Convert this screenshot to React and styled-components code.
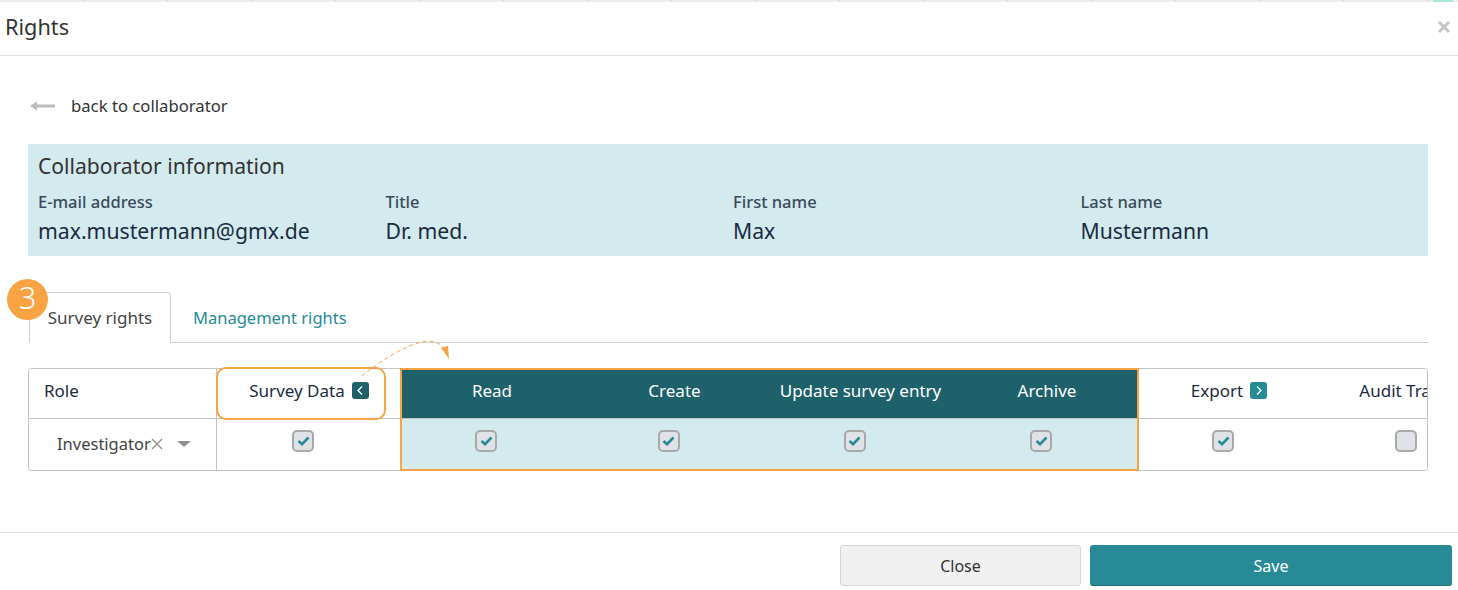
import React from "react";
import styled, { createGlobalStyle } from "styled-components";

const GlobalStyle = createGlobalStyle`
  html, body {
    margin: 0;
    padding: 0;
    background: #fff;
  }
  * {
    box-sizing: border-box;
  }
`;

const infoFields = [
  { label: "E-mail address", value: "max.mustermann@gmx.de" },
  { label: "Title", value: "Dr. med." },
  { label: "First name", value: "Max" },
  { label: "Last name", value: "Mustermann" },
];

const columns = [
  { name: "Survey Data", width: 184, toggle: "open" },
  { name: "Read", width: 182, sub: true },
  { name: "Create", width: 183, sub: true },
  { name: "Update survey entry", width: 189, sub: true },
  { name: "Archive", width: 184, sub: true },
  { name: "Export", width: 180, toggle: "closed" },
  { name: "Audit Trail", width: 186, off: true },
];

const gridColumns = "188px " + columns.map((c) => c.width + "px").join(" ");

const App = () => {
  return (
    <>
      <GlobalStyle />
      <Modal>
        <TopStrip>
          {Array.from({ length: 17 }).map((_, i) => (
            <StripCell key={i} />
          ))}
          <StripMint />
        </TopStrip>
        <Header>
          <Title>Rights</Title>
          <CloseX>
            <svg width="14" height="14" viewBox="0 0 14 14">
              <path d="M2 2l10 10M12 2L2 12" stroke="#c4c4c4" strokeWidth="3" />
            </svg>
          </CloseX>
        </Header>
        <Body>
          <BackRow>
            <svg width="25" height="10" viewBox="0 0 25 10">
              <path d="M0 5l7-4.500v3h18v3H7v3z" fill="#bdbdbd" />
            </svg>
            <span>back to collaborator</span>
          </BackRow>
          <InfoPanel>
            <InfoTitle>Collaborator information</InfoTitle>
            <InfoGrid>
              {infoFields.map((f) => (
                <div key={f.label}>
                  <InfoLabel>{f.label}</InfoLabel>
                  <InfoValue>{f.value}</InfoValue>
                </div>
              ))}
            </InfoGrid>
          </InfoPanel>
          <TabsWrap>
            <StepBadge>3</StepBadge>
            <ActiveTab>Survey rights</ActiveTab>
            <Tab>Management rights</Tab>
          </TabsWrap>
          <TableWrap>
            <Table>
              <HeadCell $first>Role</HeadCell>
              {columns.map((c) => (
                <HeadCell key={c.name} $sub={c.sub} $off={c.off} $center>
                  <span>{c.name}</span>
                  {c.toggle && (
                    <ToggleIcon $open={c.toggle === "open"}>
                      <svg width="8" height="11" viewBox="0 0 8 11">
                        <path
                          d={c.toggle === "open" ? "M6 1.500L2 5.500l4 4" : "M2 1.500l4 4-4 4"}
                          fill="none"
                          stroke="#fff"
                          strokeWidth="1.300"
                        />
                      </svg>
                    </ToggleIcon>
                  )}
                </HeadCell>
              ))}
              <RoleCell>
                <span>Investigator</span>
                <ClearIcon>
                  <svg width="12" height="12" viewBox="0 0 12 12">
                    <path d="M1 1l10 10M11 1L1 11" stroke="#8f8f8f" strokeWidth="1.300" />
                  </svg>
                </ClearIcon>
                <Caret />
              </RoleCell>
              {columns.map((c) => (
                <BodyCell key={c.name} $sub={c.sub}>
                  <CheckBox>
                    {!c.off && (
                      <svg width="13" height="10" viewBox="0 0 13 10">
                        <path d="M1.500 5l3.500 3.200L11.500 1.500" fill="none" stroke="#278b96" strokeWidth="2.600" />
                      </svg>
                    )}
                  </CheckBox>
                </BodyCell>
              ))}
            </Table>
            <SubFrame />
            <SurveyFrame />
            <ArrowLayer width="100" height="40" viewBox="0 0 100 40">
              <path
                d="M2 37C20 22 50 3 68 2c7 0 13 3 17 8"
                fill="none"
                stroke="#f9a345"
                strokeWidth="1"
                strokeDasharray="4 3"
              />
              <path d="M81 9l7-2 1 13z" fill="#f9a345" />
            </ArrowLayer>
          </TableWrap>
        </Body>
        <Footer>
          <CloseButton>Close</CloseButton>
          <SaveButton>Save</SaveButton>
        </Footer>
      </Modal>
    </>
  );
};

export default App;

const Modal = styled.div`
  width: 1458px;
  height: 590px;
  overflow: hidden;
  display: flex;
  flex-direction: column;
  font-family: "Noto Sans", sans-serif;
  color: #333;
`;

const TopStrip = styled.div`
  height: 2px;
  background: #ececec;
  display: flex;
  flex: none;
`;

const StripCell = styled.div`
  width: 84px;
  border-right: 1px solid #d6d6d6;
`;

const StripMint = styled.div`
  margin-left: 5px;
  width: 20px;
  background: #a8e8d0;
`;

const Header = styled.div`
  height: 54px;
  flex: none;
  display: flex;
  align-items: center;
  justify-content: space-between;
  padding: 0 7px 4px 5px;
  border-bottom: 1px solid #e3e3e3;
`;

const Title = styled.div`
  font-size: 21.700px;
  color: #333;
`;

const CloseX = styled.div`
  display: flex;
`;

const Body = styled.div`
  flex: 1;
  padding: 0 30px 0 28px;
`;

const BackRow = styled.div`
  height: 88px;
  display: flex;
  align-items: center;
  gap: 16px;
  padding: 11px 0 0 2px;
  font-size: 16.700px;
  color: #333;
`;

const InfoPanel = styled.div`
  height: 112px;
  background: #d3ebee;
  padding: 8px 10px;
`;

const InfoTitle = styled.div`
  font-size: 21.100px;
  line-height: 28px;
  color: #333;
`;

const InfoGrid = styled.div`
  display: grid;
  grid-template-columns: repeat(4, 347.500px);
  margin-top: 12px;
`;

const InfoLabel = styled.div`
  font-size: 16.500px;
  font-weight: 500;
  line-height: 20px;
  color: #3a4a5c;
`;

const InfoValue = styled.div`
  font-size: 21.200px;
  line-height: 28px;
  margin-top: 5px;
  color: #1b2a41;
`;

const TabsWrap = styled.div`
  position: relative;
  display: flex;
  margin-top: 36px;
  margin-left: 1px;
  height: 51px;
  border-bottom: 1px solid #cfcfcf;
`;

const StepBadge = styled.div`
  position: absolute;
  left: -22px;
  top: -13px;
  width: 41px;
  height: 41px;
  border-radius: 50%;
  background: #f9a345;
  color: #fff;
  font-size: 31px;
  font-weight: 300;
  line-height: 36px;
  text-align: center;
  z-index: 2;
`;

const ActiveTab = styled.div`
  width: 142px;
  height: 51px;
  background: #fff;
  border: 1px solid #cfcfcf;
  border-bottom: none;
  border-radius: 4px 4px 0 0;
  font-size: 17px;
  line-height: 50px;
  text-align: center;
  color: #444;
`;

const Tab = styled.div`
  padding: 0 22px;
  font-size: 16.500px;
  line-height: 52px;
  color: #278b96;
`;

const TableWrap = styled.div`
  position: relative;
  margin: 25px 0 0 0;
`;

const Table = styled.div`
  display: grid;
  grid-template-columns: ${gridColumns};
  grid-template-rows: 50px 52px;
  width: 1400px;
  height: 103px;
  overflow: hidden;
  border: 1px solid #c4c4c4;
  border-radius: 3px;
`;

const HeadCell = styled.div`
  display: flex;
  align-items: center;
  gap: 7px;
  white-space: nowrap;
  font-size: 17px;
  justify-content: ${(p) => (p.$center ? "center" : "flex-start")};
  padding-left: ${(p) => (p.$first ? "15px" : "0")};
  padding-bottom: 6px;
  padding-right: ${(p) => (p.$off ? "25px" : "0")};
  background: ${(p) => (p.$sub ? "#1f616b" : "#fff")};
  color: ${(p) => (p.$sub ? "#fff" : "#1b2a41")};
  border-bottom: 1px solid #c4c4c4;
  border-right: ${(p) => (p.$first ? "1px solid #c4c4c4" : "none")};
`;

const ToggleIcon = styled.span`
  width: 17px;
  height: 17px;
  border-radius: 3px;
  display: flex;
  align-items: center;
  justify-content: center;
  background: ${(p) => (p.$open ? "#1f616b" : "#278b96")};
`;

const RoleCell = styled.div`
  display: flex;
  align-items: center;
  padding: 0 0 3px 28px;
  font-size: 16.500px;
  color: #444;
  border-right: 1px solid #c4c4c4;
`;

const ClearIcon = styled.span`
  display: flex;
  margin-top: 1px;
`;

const Caret = styled.span`
  margin-left: 14px;
  width: 0;
  height: 0;
  border-left: 7px solid transparent;
  border-right: 7px solid transparent;
  border-top: 6px solid #8f8f8f;
`;

const BodyCell = styled.div`
  display: flex;
  align-items: center;
  justify-content: center;
  padding: 0 12px 8px 0;
  background: ${(p) => (p.$sub ? "#d3ebee" : "#fff")};
`;

const CheckBox = styled.span`
  width: 22px;
  height: 22px;
  border-radius: 5px;
  border: 2px solid #a9a9a9;
  background: #dfe2e7;
  display: flex;
  align-items: center;
  justify-content: center;
`;

const SubFrame = styled.div`
  position: absolute;
  left: 372px;
  top: 0;
  width: 739px;
  height: 103px;
  border: 2px solid #f9a345;
  pointer-events: none;
`;

const SurveyFrame = styled.div`
  position: absolute;
  left: 188px;
  top: -1px;
  width: 170px;
  height: 53px;
  border: 2px solid #f9a345;
  border-radius: 10px;
  pointer-events: none;
`;

const ArrowLayer = styled.svg`
  position: absolute;
  left: 332px;
  top: -29px;
  overflow: visible;
  pointer-events: none;
`;

const Footer = styled.div`
  height: 58px;
  flex: none;
  display: flex;
  justify-content: flex-end;
  gap: 9px;
  padding: 12px 6px 4px 0;
  border-top: 1px solid #e3e3e3;
`;

const CloseButton = styled.button`
  width: 241px;
  height: 41px;
  font-family: "Noto Sans", sans-serif;
  font-size: 16px;
  color: #333;
  background: #f0f0f0;
  border: 1px solid #d6d6d6;
  border-radius: 3px;
`;

const SaveButton = styled.button`
  width: 362px;
  height: 41px;
  padding-top: 2px;
  font-family: "Noto Sans", sans-serif;
  font-size: 16px;
  color: #fff;
  background: #288a96;
  border: none;
  border-bottom: 1px solid #1f6d76;
  border-radius: 3px;
`;
